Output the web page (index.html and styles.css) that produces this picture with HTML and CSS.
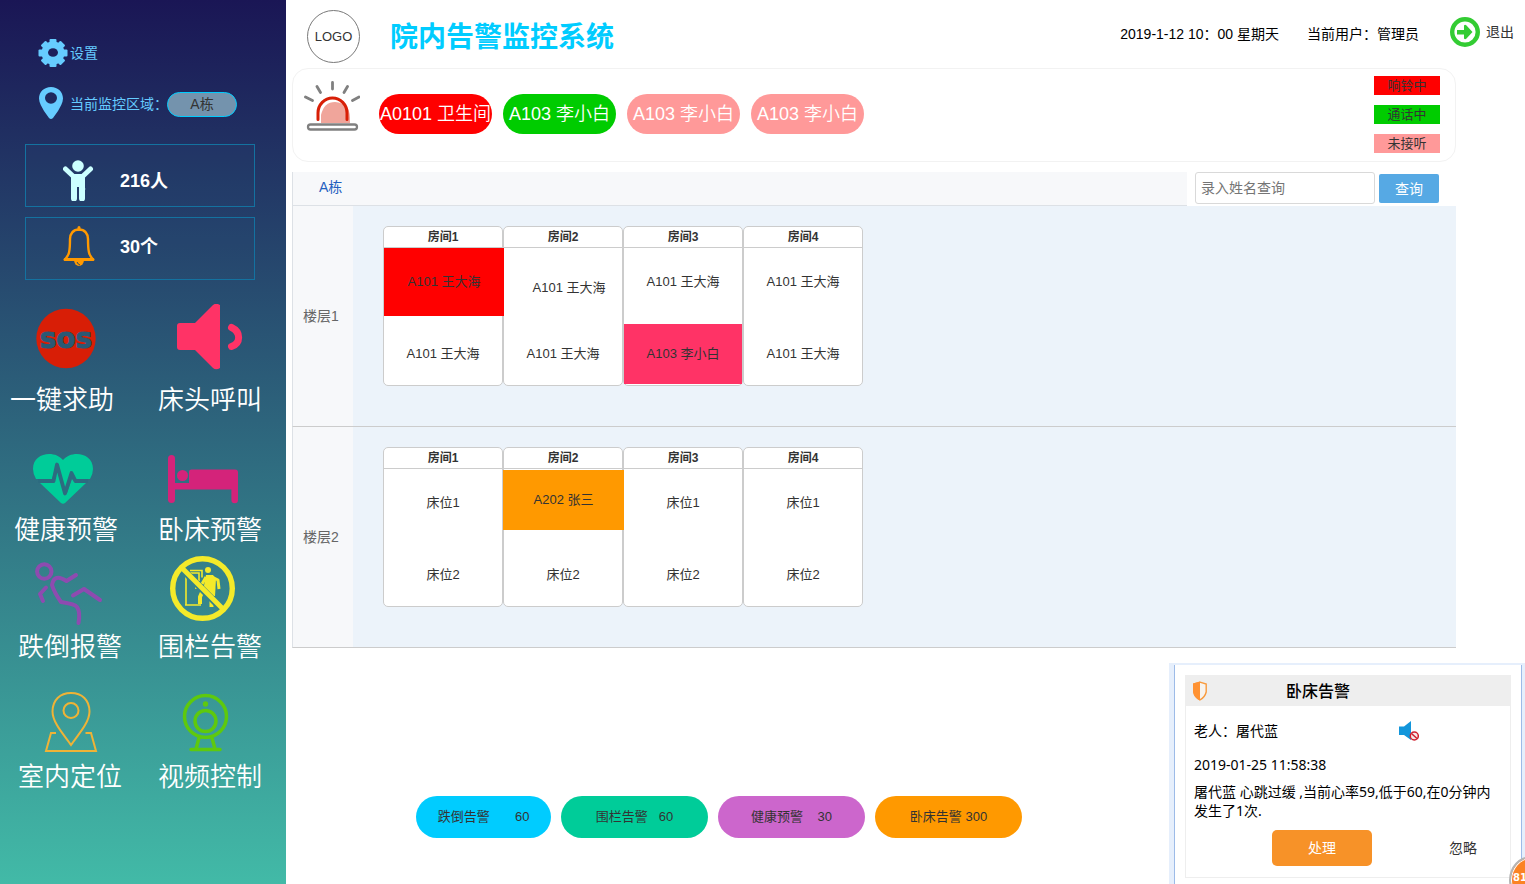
FILE: index.html
```html
<!DOCTYPE html>
<html lang="zh-CN">
<head>
<meta charset="utf-8">
<title>院内告警监控系统</title>
<meta name="viewport" content="width=device-width, initial-scale=1">
<link rel="stylesheet" href="styles.css">
</head>
<body>
<aside class="sidebar">
  <a class="setting" href="#settings">
    <svg class="setting-icon" viewBox="0 0 30 30" aria-hidden="true">
      <g fill="#66ccff">
        <rect x="11.5" y="1" width="7" height="28" rx="1"/>
        <rect x="11.5" y="0.5" width="7" height="29" rx="1" transform="rotate(90 15 15)"/>
        <rect x="11.5" y="1" width="7" height="28" rx="1" transform="rotate(45 15 15)"/>
        <rect x="11.5" y="1" width="7" height="28" rx="1" transform="rotate(-45 15 15)"/>
        <circle cx="15" cy="15" r="11.500"/>
      </g>
      <ellipse cx="15" cy="14.500" rx="5" ry="4.300" fill="#1d1f5b"/>
    </svg>
    <span>设置</span>
  </a>
  <div class="area">
    <svg class="area-icon" viewBox="0 0 24 32" aria-hidden="true">
      <path fill="#66ccff" fill-rule="evenodd" d="M12 0C5 0 0 5 0 11.500C0 16 3 20 5 24L10 31Q12 33 14 31L19 24C21 20 24 16 24 11.500C24 5 19 0 12 0ZM12 5.300A6 5.700 0 1 1 12 16.700A6 5.700 0 1 1 12 5.300Z"/>
    </svg>
    <span class="area-label">当前监控区域<span class="colon">：</span></span>
    <button class="area-button" type="button">A栋</button>
  </div>

  <div class="stat stat-people">
    <svg class="stat-icon" viewBox="63 161 32 41" aria-hidden="true">
      <g fill="#ccffff"><circle cx="78" cy="167" r="5.800"/><path d="M71 176h14v13a2 2 0 0 1 0 2v8.500a2.500 2.500 0 0 1-6 0V188h-2v11.500a2.500 2.500 0 0 1-6 0Z"/></g>
      <path d="M65.500 170l8 7.500h9l8-7.500" fill="none" stroke="#ccffff" stroke-width="5" stroke-linecap="round" stroke-linejoin="round"/>
    </svg>
    <strong>216人</strong>
  </div>
  <div class="stat stat-alarm">
    <svg class="stat-icon" viewBox="63 226 32 41" aria-hidden="true">
      <path d="M79 229.500C73 229.500 70 234 70 239C70 252 69 255 65 259.500H93C89 255 88 252 88 239C88 234 85 229.500 79 229.500Z" fill="none" stroke="#ff9900" stroke-width="2.400" stroke-linejoin="round"/>
      <path d="M79 227.500v2M65 259.500h28" stroke="#ff9900" stroke-width="3" stroke-linecap="round"/>
      <path d="M74 260h10a5 6 0 0 1-10 0Z" fill="#ff9900"/><path d="M77 262q1 2.500 3 3" fill="none" stroke="#264a6d"/>
    </svg>
    <strong>30个</strong>
  </div>

  <nav class="menu">
    <div class="menu-row">
      <a class="menu-item" href="#sos">
        <svg class="menu-icon" viewBox="10 304 104 76" aria-hidden="true">
          <circle cx="66" cy="338.500" r="29.700" fill="#d81e06"/>
          <text class="sos" x="66" y="347.500" text-anchor="middle">sos</text>
        </svg>
        <span>一键求助</span>
      </a>
      <a class="menu-item" href="#bedside">
        <svg class="menu-icon" viewBox="158 304 104 76" aria-hidden="true">
          <path fill="#ff3366" d="M180 323h15l18-18q3-2.500 7 0V368q-4 2.500-7 0l-18-18h-15q-3 0-3-3V326q0-3 3-3Z"/>
          <path d="M231.500 327.500C241 332 241 343 231.500 346.500" fill="none" stroke="#ff3366" stroke-width="7" stroke-linecap="round"/>
        </svg>
        <span>床头呼叫</span>
      </a>
    </div>
    <div class="menu-row menu-row-health">
      <a class="menu-item" href="#health">
        <svg class="menu-icon" viewBox="14 434 104 76" aria-hidden="true">
          <path fill="#00cc99" d="M63 460C55 450 33 452 33 469Q33 474 36 479H52L57 463L65 493L72 476L75 479H90Q93 474 93 469C93 452 71 450 63 460Z"/>
          <path fill="#00cc99" d="M40 483H52L57 468L63 490L67 493L72 479L75 483H86L65 503Q63 504.500 61 503Z"/>
          <path d="M38 481H53.500L57 464.500L65 493.500L71.500 473L75.500 481H88" fill="none" stroke="#2d6b80" stroke-width="3.800" stroke-linejoin="round"/>
        </svg>
        <span>健康预警</span>
      </a>
      <a class="menu-item" href="#bed">
        <svg class="menu-icon" viewBox="158 434 104 76" aria-hidden="true">
          <g fill="#d4237a"><rect x="168" y="455" width="7" height="48" rx="3.500"/><circle cx="182.500" cy="475.500" r="5.500"/><path d="M175 483h14v-11q0-2.500 2.500-2.500H235q3 0 3 3V500a3.300 3.300 0 0 1-6.600 0V489.500H175Z"/></g>
        </svg>
        <span>卧床预警</span>
      </a>
    </div>
    <div class="menu-row menu-row-fall">
      <a class="menu-item" href="#fall">
        <svg class="menu-icon" viewBox="18 551 104 76" aria-hidden="true">
          <g fill="none" stroke="#8e4bb0" stroke-width="4" stroke-linecap="round" stroke-linejoin="round">
            <circle cx="44.300" cy="571.500" r="7.200"/>
            <path d="M46 587.500L40 594L43 601M76 575L66.500 581Q54 573 52 585Q54 592 61 602Q75 604 77 607Q80.500 612 78.500 623M73 595.500L84 589L100 600"/>
          </g>
        </svg>
        <span>跌倒报警</span>
      </a>
      <a class="menu-item" href="#fence">
        <svg class="menu-icon" viewBox="158 551 104 76" aria-hidden="true">
          <g fill="none" stroke="#f4ea2a">
            <path d="M186 577v28M185 605h16M190 570.500h12v7M188 573h11v8M196 585v4" stroke-width="1.600"/>
            <path d="M206 577L202 584M212 577L218 580L219 589" stroke-width="3" stroke-linejoin="round"/>
            <path d="M203 590L200 597V604M211.500 590V607" stroke-width="4"/>
          </g>
          <path fill="#f4ea2a" d="M206 575h7l3 4-1 17h-7l-5-5z"/>
          <circle cx="208" cy="570" r="3" fill="#f4ea2a"/>
          <path d="M181 568L223 610" stroke="#34828b" stroke-width="7"/>
          <path d="M181 567L224 610" stroke="#f4ea2a" stroke-width="5"/>
          <circle cx="202.500" cy="588.500" r="29.800" fill="none" stroke="#f4ea2a" stroke-width="5.400"/>
        </svg>
        <span>围栏告警</span>
      </a>
    </div>
    <div class="menu-row menu-row-place">
      <a class="menu-item" href="#location">
        <svg class="menu-icon" viewBox="18 681 104 76" aria-hidden="true">
          <g fill="none" stroke="#efb336" stroke-width="2">
            <path d="M71 745C65 736 52.500 723 52.500 711.500C52.500 700 60 693 71 693S89.500 700 89.500 711.500C89.500 723 77 736 71 745Z"/>
            <circle cx="71" cy="710.500" r="7.500"/><path d="M56 733H51L46 751H96L91 733H85.500"/>
          </g>
        </svg>
        <span>室内定位</span>
      </a>
      <a class="menu-item" href="#video">
        <svg class="menu-icon" viewBox="158 681 104 76" aria-hidden="true">
          <g fill="none" stroke="#5ec90d" stroke-width="3.500" stroke-linecap="round">
            <circle cx="205.500" cy="716.500" r="21"/><circle cx="205.500" cy="721" r="10.500"/><path d="M199 738L196 749M212 738L215 749M191 749.500H220"/>
          </g>
          <circle cx="205.500" cy="704" r="2.700" fill="#5ec90d"/>
        </svg>
        <span>视频控制</span>
      </a>
    </div>
  </nav>
</aside>

<main class="main">
  <header class="header">
    <div class="logo">LOGO</div>
    <h1 class="title">院内告警监控系统</h1>
    <span class="date">2019-1-12 10<span class="colon">：</span>00 星期天</span>
    <span class="user">当前用户<span class="colon">：</span>管理员</span>
    <a class="logout" href="#logout">
      <svg class="logout-icon" viewBox="0 0 30 30" aria-hidden="true">
        <circle cx="15" cy="15" r="12.800" fill="none" stroke="#33cc33" stroke-width="4.400"/>
        <path fill="#33cc33" d="M7 13h7V8.500q1-1.500 2.500 0L22.500 15L16.500 21.500q-1.500 1.500-2.500 0V17.500H7Z"/>
      </svg>
      <span>退出</span>
    </a>
  </header>

  <section class="calls">
    <svg class="siren" viewBox="304 80 56 52" aria-hidden="true">
      <path d="M321 123V115Q324 102 335 102Q350 103 350 118V123Z" fill="#f0a59b"/>
      <path d="M318 119.500V113A14 14.500 0 0 1 347 113V119.500" fill="none" stroke="#d81e06" stroke-width="3" stroke-linecap="round"/>
      <rect x="308" y="124.500" width="49" height="5" rx="2.500" fill="#fff" stroke="#808080" stroke-width="2.300"/>
      <path d="M332.500 82.500V89M317 86.500L320.500 92.500M347.500 86.500L344 92.500M305.500 97L312.500 100.500M359 97L352.500 100.500" stroke="#808080" stroke-width="2.800" stroke-linecap="round"/>
    </svg>
    <button class="call call-ringing" type="button">A0101 卫生间</button>
    <button class="call call-talking" type="button">A103 李小白</button>
    <button class="call call-missed" type="button">A103 李小白</button>
    <button class="call call-missed" type="button">A103 李小白</button>
    <div class="legend">
      <span class="call-ringing">响铃中</span>
      <span class="call-talking">通话中</span>
      <span class="call-missed">未接听</span>
    </div>
  </section>

  <section class="board">
    <div class="toolbar">
      <div class="tabs"><a href="#a">A栋</a></div>
      <form class="search">
        <input type="text" placeholder="录入姓名查询" aria-label="录入姓名查询">
        <button type="button">查询</button>
      </form>
    </div>
    <div class="floor">
      <div class="floor-name">楼层1</div>
      <div class="rooms">
        <article class="room"><h2>房间1</h2><div class="beds"><div class="bed bed-ringing">A101 王大海</div><div class="bed">A101 王大海</div></div></article>
        <article class="room"><h2>房间2</h2><div class="beds"><div class="bed bed-indent">A101 王大海</div><div class="bed">A101 王大海</div></div></article>
        <article class="room"><h2>房间3</h2><div class="beds"><div class="bed">A101 王大海</div><div class="bed bed-call">A103 李小白</div></div></article>
        <article class="room"><h2>房间4</h2><div class="beds"><div class="bed">A101 王大海</div><div class="bed">A101 王大海</div></div></article>
      </div>
    </div>
    <div class="floor">
      <div class="floor-name">楼层2</div>
      <div class="rooms">
        <article class="room"><h2>房间1</h2><div class="beds"><div class="bed">床位1</div><div class="bed">床位2</div></div></article>
        <article class="room"><h2>房间2</h2><div class="beds"><div class="bed bed-leave">A202 张三</div><div class="bed">床位2</div></div></article>
        <article class="room"><h2>房间3</h2><div class="beds"><div class="bed">床位1</div><div class="bed">床位2</div></div></article>
        <article class="room"><h2>房间4</h2><div class="beds"><div class="bed">床位1</div><div class="bed">床位2</div></div></article>
      </div>
    </div>
  </section>

  <footer class="totals">
    <button class="total total-fall" type="button">跌倒告警&nbsp;&nbsp;&nbsp;&nbsp;&nbsp;&nbsp;&nbsp;60</button>
    <button class="total total-fence" type="button">围栏告警&nbsp;&nbsp;&nbsp;60</button>
    <button class="total total-health" type="button">健康预警&nbsp;&nbsp;&nbsp;&nbsp;30</button>
    <button class="total total-bed" type="button">卧床告警 300</button>
  </footer>
</main>

<aside class="popup">
  <div class="popup-frame">
    <div class="notice">
      <div class="notice-head">
        <svg class="shield" viewBox="0 0 14 20" aria-hidden="true">
          <path d="M7 1.200L13.200 3V11Q12 16 7 18.800Q2 16 .8 11V3Z" fill="#f7f3ee" stroke="#f99a3c" stroke-width="1.400"/>
          <path d="M7 .5L0 2.500V11Q1 17 7 19.500Z" fill="#ff9233"/>
        </svg>
        <h2>卧床告警</h2>
      </div>
      <div class="notice-person">
        <span>老人<span class="colon">：</span>屠代蓝</span>
        <button class="mute" type="button" aria-label="静音">
          <svg viewBox="0 0 20 20" aria-hidden="true">
            <path d="M0 5.500H5L12 0V19L5 14H0Z" fill="#1296db"/>
            <circle cx="15.300" cy="15" r="4" fill="#f6e8e8" stroke="#d0202e" stroke-width="1.500"/><path d="M12.500 12.500L18 17.500" stroke="#d0202e" stroke-width="1.500"/>
          </svg>
        </button>
      </div>
      <time class="notice-time">2019-01-25 11:58:38</time>
      <p class="notice-text">屠代蓝 心跳过缓 ,当前心率59,低于60,在0分钟内发生了1次.</p>
      <div class="notice-actions">
        <button class="handle" type="button">处理</button>
        <button class="ignore" type="button">忽略</button>
      </div>
    </div>
  </div>
  <div class="badge">81</div>
</aside>
</body>
</html>
```
FILE: styles.css
```css
* { box-sizing: border-box; }

body {
  margin: 0;
  min-height: 100vh;
  display: grid;
  grid-template-columns: 286px minmax(0, 1fr);
  background: #fff;
  color: #333;
  font: 14px/20px "Liberation Sans", "Noto Sans CJK SC", sans-serif;
}

a { color: inherit; text-decoration: none; }
button { padding: 0; border: 0; background: none; color: inherit; font: inherit; cursor: pointer; }
h1, h2, p { margin: 0; }
svg { display: block; flex: none; }
.colon { font-family: "Noto Sans CJK TC", sans-serif; line-height: 1; }

/* sidebar */
.sidebar {
  padding-top: 38px;
  background: linear-gradient(#1a1655, #42baa7);
}
.setting, .area {
  display: flex;
  align-items: center;
  color: #66ccff;
}
.setting { margin-left: 38px; width: 80px; gap: 2px; }
.setting-icon { width: 30px; height: 30px; }
.area { margin: 18px 0 0 39px; padding-top: 2px; height: 34px; }
.area-icon { width: 24px; height: 32px; margin: 0 7px 2px 0; }
.area-label { white-space: nowrap; }
.area-button {
  width: 70px;
  height: 25px;
  margin-left: -1px;
  border: 1px solid #00ccff;
  border-radius: 13px;
  background: #7493ad;
  color: #333;
}
.stat {
  display: flex;
  align-items: center;
  width: 230px;
  height: 63px;
  margin: 0 0 10px 25px;
  padding-left: 37px;
  gap: 25px;
  border: 1px solid #1472a0;
  background: rgba(40, 80, 120, .12);
  color: #fff;
  font-size: 18px;
}
.stat-people { margin-top: 24px; padding-top: 10px; }
.stat-alarm { padding-bottom: 4px; }
.stat-icon { width: 32px; height: 41px; }

.menu { margin-top: 24px; color: #fff; font-size: 26px; line-height: 40px; font-weight: 350; }
.menu-row { display: flex; justify-content: space-between; padding: 0 24px 0 10px; }
.menu-row-health { margin-top: 14px; padding-left: 14px; }
.menu-row-fall { margin-top: 1px; padding-left: 18px; }
.menu-row-place { margin-top: 14px; padding-left: 18px; }
.menu-item { display: block; white-space: nowrap; }
.menu-icon { width: 104px; height: 76px; }
.menu-item span { display: block; }
.sos { fill: #2a5974; stroke: #2a5974; stroke-width: 1px; font: bold 28px "DejaVu Sans", sans-serif; }

/* header */
.main { padding: 0 0 46px 6px; }
.header { display: flex; align-items: center; height: 68px; padding: 0 11px 0 15px; color: #000; }
.logo {
  display: grid;
  place-items: center;
  width: 53px;
  height: 53px;
  margin-top: 5px;
  border: 1px solid #797979;
  border-radius: 50%;
  color: #333;
  font-size: 13px;
}
.title { margin: 7px auto 0 30px; color: #00ccff; font-size: 28px; line-height: 40px; }
.user { margin: 0 31px 0 28px; }
.logout { display: flex; align-items: center; gap: 6px; margin-bottom: 4px; color: #333; }
.logout-icon { width: 30px; height: 30px; }

/* calls */
.calls {
  display: flex;
  gap: 11px;
  margin-right: 69px;
  height: 94px;
  padding: 7px 15px 0 11px;
  border: 1px solid #f2f2f2;
  border-radius: 16px;
}
.siren { width: 56px; height: 52px; margin: 4px 8px 0 0; }
.call { width: 113px; height: 40px; margin-top: 18px; border-radius: 20px; color: #fff; font-size: 18px; font-weight: 350; white-space: nowrap; }
.call-ringing { background: #ff0000; }
.call-talking { background: #00cc00; }
.call-missed { background: #ff9999; }
.legend { display: grid; align-content: start; gap: 10px; width: 66px; margin-left: auto; font-size: 13px; line-height: 19px; text-align: center; }

/* board */
.board { margin: 10px 69px 0 0; }
.toolbar { display: flex; height: 34px; }
.tabs { flex: 1; padding: 5px 26px; border: solid #dde1e6; border-width: 0 0 1px 1px; background: #f7f8fa; color: #1f5fbf; }
.search { display: flex; align-items: flex-start; gap: 4px; padding: 0 17px 0 8px; }
.search input { width: 180px; height: 32px; padding: 0 5px; border: 1px solid #d9d9d9; border-radius: 3px; color: #333; font: inherit; }
.search input::placeholder { color: #757575; opacity: 1; }
.search button { width: 60px; height: 29px; margin-top: 2px; border-radius: 2px; background: #56a9e4; color: #fff; }
.floor { display: flex; min-height: 221px; border: solid #ccc; border-width: 0 0 1px 1px; border-left-color: #dde1e6; background: #ecf3fa; }
.floor-name { display: flex; align-items: center; width: 60px; padding-left: 10px; background: #f7f8fa; color: #666; }
.rooms { display: flex; align-items: flex-start; padding: 20px 30px; }
.room { width: 120px; height: 160px; border: 1px solid #ccc; border-radius: 5px; background: #fff; font-size: 13px; }
.room h2 { border-bottom: 1px solid #ccc; font-size: 12px; line-height: 20px; text-align: center; }
.beds { display: grid; grid-template-rows: 68px 60px; row-gap: 8px; }
.bed { display: grid; place-items: center; }
.bed-indent { padding: 12px 0 0 12px; }
.bed-ringing, .bed-leave { position: relative; z-index: 1; }
.bed-ringing { margin-right: -2px; background: #ff0000; }
.bed-call { background: #ff3366; }
.bed-leave { margin: 1px -2px 7px -1px; background: #ff9900; }

/* totals */
.totals { display: flex; gap: 10px; margin: 148px 0 0 124px; font-size: 13px; }
.total { width: 147px; height: 42px; border-radius: 21px; white-space: nowrap; }
.total-fall { width: 135px; background: #00ccff; }
.total-fence { background: #00cc99; }
.total-health { background: #cc66cc; }
.total-bed { background: #ff9900; }

/* popup */
.popup {
  position: fixed;
  right: 0;
  bottom: 0;
  width: 356px;
  overflow: hidden;
  padding: 2px 3px 0 5px;
  background: #e6effc;
  color: #000;
  font-family: "Noto Sans", "Noto Sans CJK SC", sans-serif;
}
.popup-frame { padding: 10px 10px 6px; border: solid #9dbbe8; border-width: 0 1px; background: #fff; }
.notice { height: 203px; border: 1px solid #eee; }
.notice-head { display: flex; align-items: center; height: 30px; padding-left: 7px; background: #eee; }
.notice-head h2 { margin-left: 79px; font-size: 16px; font-weight: 500; }
.shield { width: 14px; height: 20px; }
.notice-person { display: flex; align-items: center; justify-content: space-between; height: 50px; padding: 0 91px 0 8px; }
.mute svg { width: 20px; height: 20px; }
.notice-time { display: block; padding: 0 8px; line-height: 18px; }
.notice-text { margin-top: 8px; padding: 0 8px; line-height: 19px; }
.notice-actions { display: flex; justify-content: space-between; margin-top: 10px; padding: 0 33px 0 86px; }
.handle { width: 100px; height: 36px; border-radius: 5px; background: #f79228; color: #fff; }
.ignore { color: #333; }
.badge {
  position: absolute;
  right: -28px;
  bottom: -20px;
  width: 44px;
  height: 48px;
  padding: 13px 0 0 2px;
  border: 2px solid #b5b5b5;
  border-radius: 50%;
  box-shadow: inset 0 0 0 1px #fff;
  background: #fb8324;
  color: #fff;
  font: bold 10px/14px "DejaVu Sans", sans-serif;
}
```
